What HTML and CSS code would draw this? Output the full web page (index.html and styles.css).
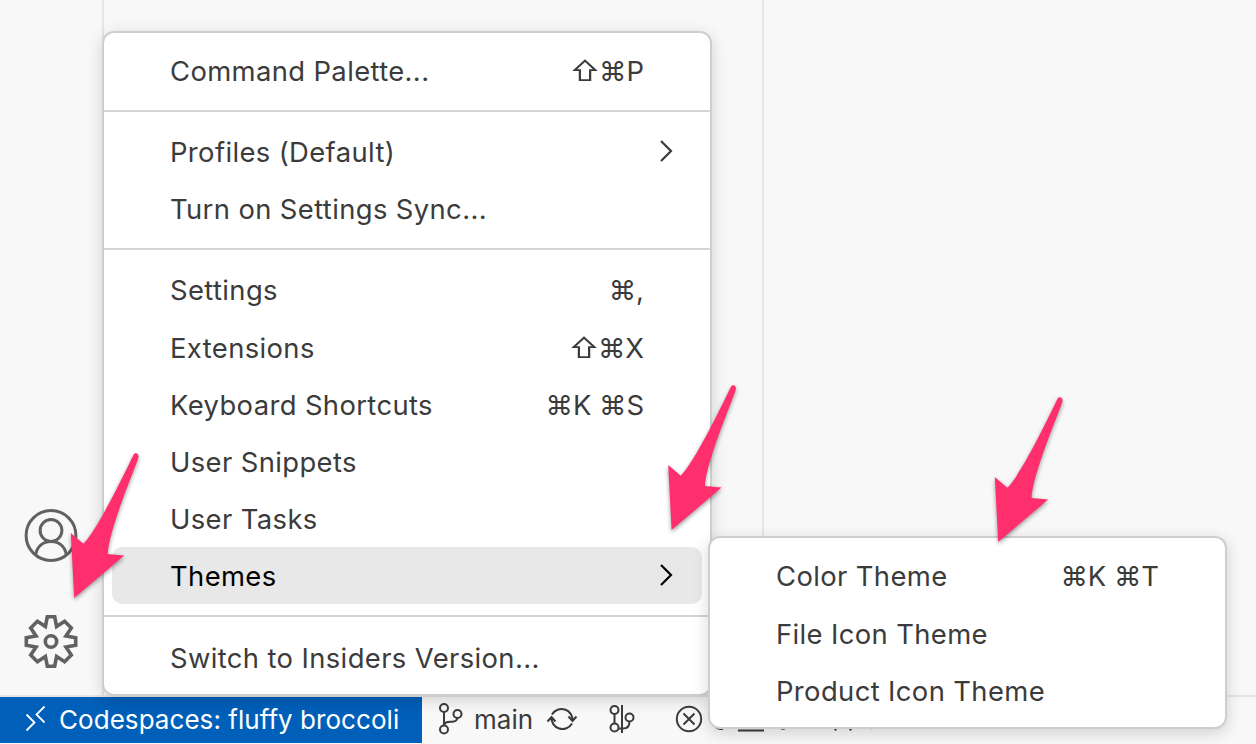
FILE: index.html
```html
<!DOCTYPE html>
<html lang="en">
<head>
<meta charset="utf-8">
<title>Editor</title>
<link rel="stylesheet" href="styles.css">
</head>
<body>
<div class="window">
  <div class="workbench">
    <nav class="activity-bar">
      <svg class="activity-icon" width="54" height="54" viewBox="0 0 54 54" fill="none" stroke="#616161" stroke-width="3">
        <circle cx="27" cy="26.500" r="24.900"/><circle cx="27" cy="21.500" r="10.900"/>
        <path d="M11.800 46C12.500 37.500 19 32.400 27 32.400S41.500 37.500 42.200 46"/>
      </svg>
      <svg class="activity-icon" width="54" height="54" viewBox="0 0 54 54" fill="none" stroke="#616161" stroke-width="3.600">
        <path transform="translate(0 -.5)" d="M23.300 2.300H30.700L32.600 12.100L40.600 6.700L47.300 13.400L41.900 21.400L51.700 23.300V30.700L41.900 32.600L47.300 40.600L40.600 47.300L32.600 41.900L30.700 51.700H23.300L21.400 41.900L13.400 47.300L6.700 40.600L12.100 32.600L2.300 30.700V23.300L12.100 21.400L6.700 13.400L13.400 6.700L21.400 12.100Z"/>
        <circle cx="27" cy="26.500" r="5.700"/>
      </svg>
    </nav>
    <div class="side-bar"></div>
    <div class="editor"></div>
  </div>
  <footer class="status-bar">
    <div class="remote">
      <svg width="22" height="28" viewBox="0 0 22 28" fill="none" stroke="#fff" stroke-width="1.800"><path d="M1.500 10.500L9.500 18.500L1.500 26.500M19.500 2.500L11.500 10.500L19.500 18.500"/></svg>
      <span class="remote-text">Codespaces: fluffy broccoli</span>
    </div>
    <div class="status-items">
      <svg class="branch" width="26" height="32" viewBox="0 0 26 32" fill="none" stroke="#3b3b3b" stroke-width="2"><circle cx="6" cy="5" r="4"/><circle cx="19.500" cy="11" r="4"/><circle cx="6" cy="26.500" r="4"/><path d="M6 9V22.500M6 22.500C7 18 11 19 14.500 18.800Q18.500 18.500 19.500 15"/></svg>
      <span class="branch-text">main</span>
      <svg class="sync" width="32" height="26" viewBox="0 0 32 26" fill="none" stroke="#3b3b3b" stroke-width="2"><path d="M6 8.500A11 11 0 0 1 26.500 15M26 17.500A11 11 0 0 1 5.500 11M1.500 15.500L5.500 11L9.500 15.500M22.500 10.500L26.500 15L30.500 10.500"/></svg>
      <svg class="graph" width="26" height="30" viewBox="0 0 26 30" fill="none" stroke="#3b3b3b" stroke-width="2"><circle cx="5.500" cy="6" r="4"/><circle cx="5.500" cy="23.500" r="4"/><circle cx="20.500" cy="13.500" r="4"/><path d="M5.500 10V19.500M13 1V29M9.500 24.500H14C18 24.500 20.500 22 20.500 17.500"/></svg>
      <svg class="errors" width="28" height="28" viewBox="0 0 28 28" fill="none" stroke="#3b3b3b" stroke-width="2"><circle cx="14" cy="14" r="12.200"/><path d="M8.500 8.500L19.500 19.500M19.500 8.500L8.500 19.500"/></svg>
      <svg class="hidden-items" width="160" height="30" viewBox="0 0 160 30" fill="none" stroke="#3b3b3b" stroke-width="2"><path d="M4 22.500Q8 25 11 23.500M26 25.500H52M68 22.500Q71 25 74 22.500M123 25.500L126 19M139 25.500L136 19M158 22Q161 25 163 22"/></svg>
    </div>
  </footer>
</div>

<div class="menu main-menu">
  <div class="item"><span class="label">Command Palette...</span><span class="keys"><span class="shift">⇧</span>⌘P</span></div>
  <div class="separator"></div>
  <div class="item"><span class="label">Profiles (Default)</span><svg class="chevron" width="14" height="24" viewBox="0 0 14 24"><path d="M2 2L12 12L2 22"/></svg></div>
  <div class="item"><span class="label">Turn on Settings Sync...</span></div>
  <div class="separator"></div>
  <div class="item"><span class="label">Settings</span><span class="keys">⌘,</span></div>
  <div class="item low"><span class="label">Extensions</span><span class="keys"><span class="shift">⇧</span>⌘X</span></div>
  <div class="item low"><span class="label">Keyboard Shortcuts</span><span class="keys">⌘K ⌘S</span></div>
  <div class="item low"><span class="label">User Snippets</span></div>
  <div class="item low"><span class="label">User Tasks</span></div>
  <div class="item low selected"><span class="label">Themes</span><svg class="chevron" width="14" height="24" viewBox="0 0 14 24"><path d="M2 2L12 12L2 22"/></svg></div>
  <div class="separator last"></div>
  <div class="item low"><span class="label">Switch to Insiders Version...</span></div>
</div>

<div class="menu submenu">
  <div class="item"><span class="label">Color Theme</span><span class="keys">⌘K ⌘T</span></div>
  <div class="item low"><span class="label">File Icon Theme</span></div>
  <div class="item low"><span class="label">Product Icon Theme</span></div>
</div>

<svg class="arrows" width="1256" height="744" viewBox="0 0 1256 744">
  <defs><path id="arrow" d="M133.700 454.600C135 452 139 453 138.500 457C137.500 463 109 528 107.700 554L124.200 555.600L74.200 598L70.800 533L83.400 543.700C98 530 129 464 133.700 454.600Z"/></defs>
  <use href="#arrow"/><use href="#arrow" x="597.400" y="-68"/><use href="#arrow" x="924" y="-56"/>
</svg>
</body>
</html>
```

FILE: styles.css
```css
* { box-sizing: border-box; }
body {
  margin: 0;
  width: 1256px;
  height: 744px;
  overflow: hidden;
  background: #f8f8f8;
  color: #3b3b3b;
  font-family: Inter, "Liberation Sans", sans-serif;
  font-size: 27.4px;
  letter-spacing: 0.38px;
}
svg { display: block; flex: none; }
.window { display: flex; flex-direction: column; height: 743px; }
.workbench { display: flex; flex: 1; }
.activity-bar {
  display: flex;
  flex-direction: column;
  justify-content: flex-end;
  gap: 52px;
  width: 104px;
  padding: 0 0 26px 24px;
  border-right: 2px solid #e5e5e5;
}
.side-bar { width: 660px; border-right: 2px solid #e5e5e5; }
.editor { flex: 1; }
.status-bar {
  display: flex;
  height: 48px;
  border-top: 2px solid #e5e5e5;
  font-size: 26px;
  letter-spacing: 0;
}
.remote {
  display: flex;
  align-items: center;
  gap: 12px;
  width: 422px;
  padding-left: 25px;
  background: #005fb8;
  color: #fff;
  white-space: nowrap;
}
.remote svg { margin-top: -5px; }
.remote-text { letter-spacing: 0.05px; padding-bottom: 2px; }
.status-items { display: flex; align-items: center; padding-left: 16px; }
.branch { margin-top: -2px; }
.branch-text { margin-left: 10px; width: 72px; padding-bottom: 2px; }
.sync { margin-top: -3px; }
.graph { margin: -2px 0 0 31px; }
.errors { margin: -3px 0 0 40px; }
.hidden-items { margin-left: 9px; }

.menu {
  position: absolute;
  padding: 10px 8px 8px;
  border: 2px solid #cecece;
  border-radius: 12px;
  background: #fff;
  box-shadow: 0 4px 16px rgba(0, 0, 0, 0.16);
}
.main-menu { left: 102px; top: 31px; width: 610px; height: 665px; }
.submenu { left: 708px; top: 536px; width: 519px; height: 193px; }
.item {
  display: flex;
  align-items: center;
  justify-content: space-between;
  height: 57px;
  padding: 0 58px 2px;
  border-radius: 10px;
  white-space: nowrap;
}
.low { padding-bottom: 0; }
.selected { background: #e8e8e8; color: #000; }
.keys { letter-spacing: 0; }
.shift { display: inline-block; transform: scaleX(1.1); }
.separator { height: 2px; margin: 10px -8px 12px; background: #d4d4d4; }
.last { margin-top: 11px; }
.chevron {
  margin: -1px -29px 0 0;
  fill: none;
  stroke: currentColor;
  stroke-width: 2.2;
}
.arrows {
  position: absolute;
  left: 0;
  top: 0;
  fill: #ff2f6e;
  filter: drop-shadow(0 2px 2px rgba(0, 0, 0, 0.4));
}
```
